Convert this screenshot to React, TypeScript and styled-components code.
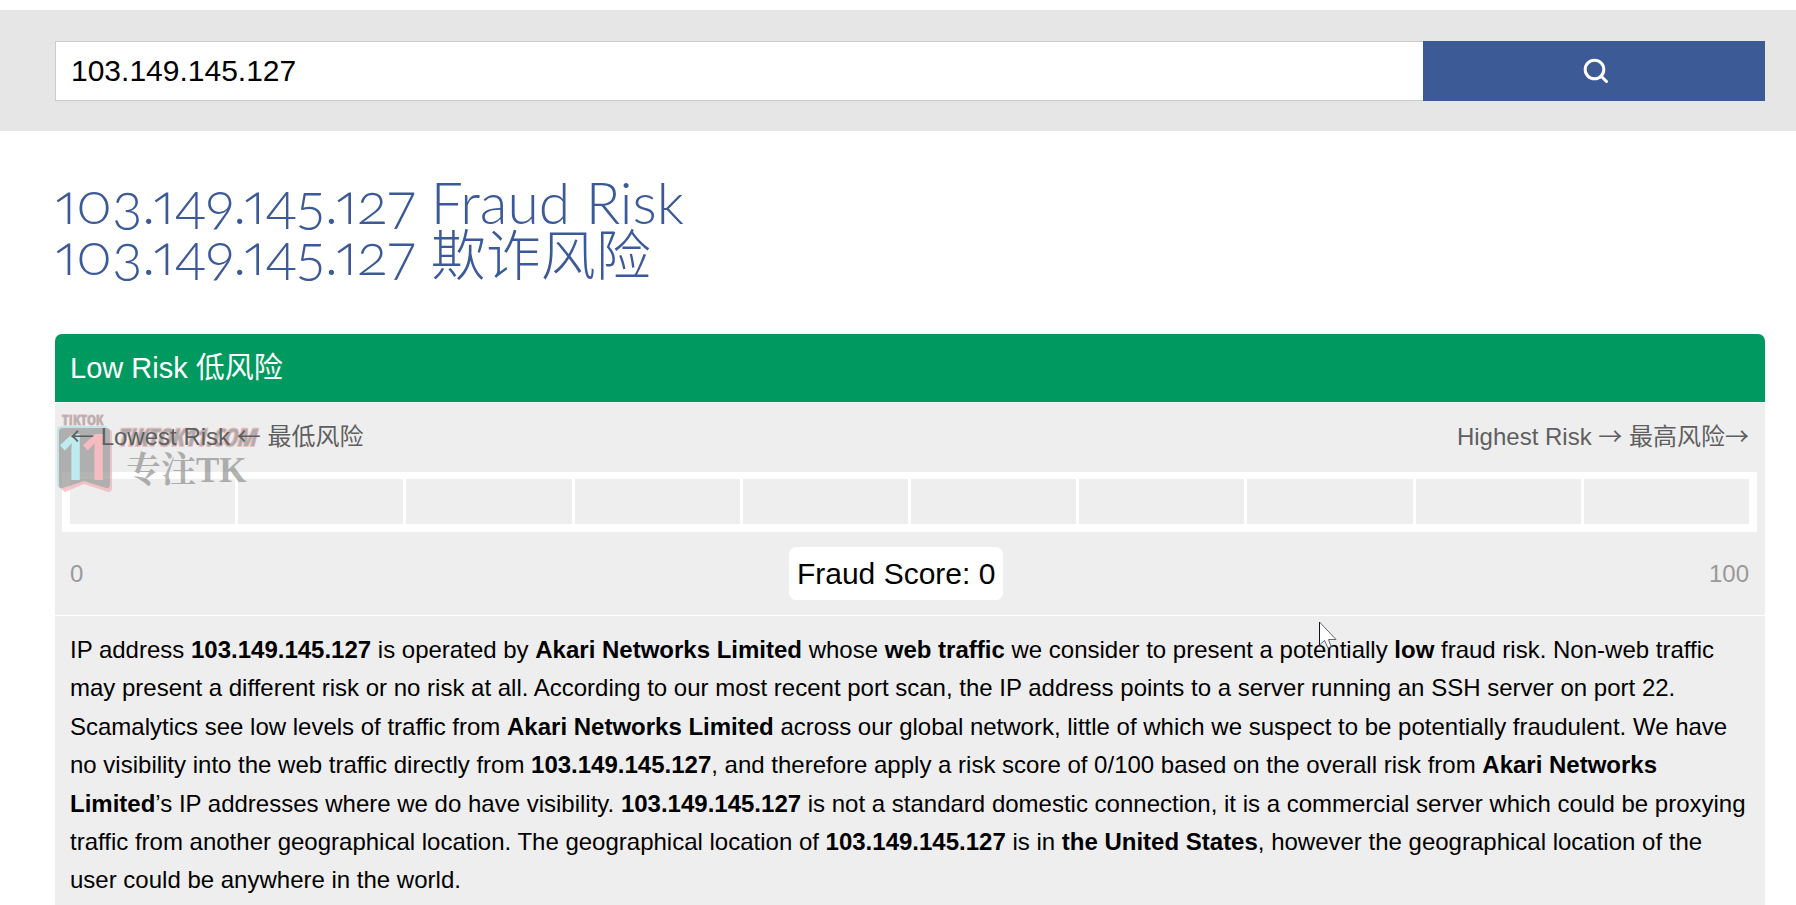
import React, { useState } from 'react'
import styled, { createGlobalStyle } from 'styled-components'

const GlobalStyle = createGlobalStyle`
  * {
    box-sizing: border-box;
  }

  body {
    margin: 0;
    background: #fff;
    color: #000;
    font-family: "Liberation Sans", "Noto Sans CJK SC", sans-serif;
    font-size: 24px;
  }
`

const Page = styled.div`
  padding-top: 10px;
  overflow: hidden;
`

const SearchBar = styled.form`
  display: flex;
  padding: 31px 31px 30px 55px;
  background: #e6e6e6;
`

const SearchInput = styled.input`
  width: 80%;
  height: 60px;
  padding: 0 15px;
  border: 1px solid #ccc;
  border-right: 0;
  border-radius: 0;
  background: #fff;
  color: #000;
  font-family: inherit;
  font-size: 30px;
  outline: none;
`

const SearchButton = styled.button`
  width: 20%;
  display: flex;
  align-items: center;
  justify-content: center;
  padding: 0 0 0 4px;
  border: 0;
  background: #3c5a96;
  cursor: pointer;
`

const Main = styled.main`
  padding: 46px 31px 0 55px;
`

const Title = styled.h1`
  margin: 0 0 54px;
  color: #3c5a99;
  font-family: Lato, "Noto Sans CJK SC", sans-serif;
  font-size: 57px;
  font-weight: 300;
  line-height: 51px;
  font-variant-numeric: oldstyle-nums proportional-nums;
`

const TitleChinese = styled.span`
  font-size: 55px;
`

const Panel = styled.section`
  position: relative;
  background: #eee;
  border-radius: 7px 7px 0 0;
`

const PanelTitle = styled.div`
  padding: 14px 15px;
  border-radius: 7px 7px 0 0;
  background: #009a60;
  color: #fff;
  font-size: 29px;
  line-height: 40px;
`

const Score = styled.div`
  padding: 15px 8px 15px 7px;
  border-top: 1px solid #fff;
  border-bottom: 1px solid #fff;
`

const ScaleRow = styled.div`
  display: flex;
  justify-content: space-between;
  align-items: center;
  padding: 0 8px;
`

const Labels = styled(ScaleRow)`
  position: relative;
  z-index: 1;
  padding-bottom: 16px;
  color: #5f5f5f;
  line-height: 38px;
`

const Arrow = styled.span`
  font-family: "Noto Sans CJK SC", sans-serif;
  line-height: 1;
`

const Values = styled(ScaleRow)`
  padding-top: 15px;
  color: #999;
`

const Bar = styled.div`
  display: flex;
  gap: 3px;
  padding: 7px 8px 8px;
  background: #fff;
`

const Cell = styled.div`
  flex: 1;
  height: 45px;
  background: #eee;
`

const FraudScore = styled.div`
  padding: 8px;
  border-radius: 7px;
  background: #fff;
  color: #000;
  font-size: 30px;
  line-height: 37px;
`

const Description = styled.p`
  margin: 0;
  padding: 15px;
  line-height: 1.6;
`

const Watermark = styled.svg`
  position: absolute;
  left: 0;
  top: 78px;
  overflow: visible;
  pointer-events: none;
`

const Cursor = styled.svg`
  position: absolute;
  left: 1263px;
  top: 287px;
  pointer-events: none;
`

const narrow = '"Liberation Sans Narrow", "Open Sans Condensed", "DejaVu Sans Condensed", sans-serif'

const ip = '103.149.145.127'
const isp = 'Akari Networks Limited'

const App = () => {
  const [query, setQuery] = useState(ip)

  return (
    <Page>
      <GlobalStyle />
      <SearchBar onSubmit={(e) => e.preventDefault()}>
        <SearchInput
          type="text"
          aria-label="IP address"
          value={query}
          onChange={(e) => setQuery(e.target.value)}
        />
        <SearchButton type="submit" aria-label="Search">
          <svg width="26" height="26" viewBox="0 0 26 26" fill="none" stroke="#fff" strokeWidth="3" strokeLinecap="round">
            <circle cx="11.5" cy="11.5" r="9.3" />
            <path d="M18.5 18.5 L23.5 23.5" />
          </svg>
        </SearchButton>
      </SearchBar>

      <Main>
        <Title>
          {ip} Fraud Risk
          <br />
          {ip} <TitleChinese>欺诈风险</TitleChinese>
        </Title>

        <Panel>
          <PanelTitle>Low Risk 低风险</PanelTitle>
          <Score>
            <Labels>
              <span>
                <Arrow>←</Arrow> Lowest Risk <Arrow>←</Arrow> 最低风险
              </span>
              <span>
                Highest Risk <Arrow>→</Arrow> 最高风险<Arrow>→</Arrow>
              </span>
            </Labels>
            <Bar>
              {Array.from({ length: 10 }, (_, i) => (
                <Cell key={i} />
              ))}
            </Bar>
            <Values>
              <span>0</span>
              <FraudScore>Fraud Score: 0</FraudScore>
              <span>100</span>
            </Values>
          </Score>
          <Description>
            IP address <b>{ip}</b> is operated by <b>{isp}</b> whose <b>web traffic</b> we
            consider to present a potentially <b>low</b> fraud risk. Non-web traffic may present
            a different risk or no risk at all. According to our most recent port scan, the IP
            address points to a server running an SSH server on port 22. Scamalytics see low
            levels of traffic from <b>{isp}</b> across our global network, little of which we
            suspect to be potentially fraudulent. We have no visibility into the web traffic
            directly from <b>{ip}</b>, and therefore apply a risk score of 0/100 based on the
            overall risk from <b>{isp}</b>’s IP addresses where we do have visibility. <b>{ip}</b>{' '}
            is not a standard domestic connection, it is a commercial server which could be
            proxying traffic from another geographical location. The geographical location
            of <b>{ip}</b> is in <b>the United States</b>, however the geographical location of
            the user could be anywhere in the world.
          </Description>

          <Watermark width="215" height="84" viewBox="0 0 215 84" fontFamily={narrow} fontWeight="700">
            {/* ribbon badge with its cyan and pink edges */}
            <g opacity="0.75">
              <path d="M6 14 H52 L50 72 L29 68 L6 76 Q2 76 2 72 V18 Q2 14 6 14 Z" fill="#b5e2e8" />
              <path d="M8 20 L53 17 Q57 17 57 21 V76 Q57 80 53 80 L29 72 L10 80 L5 76 Z" fill="#f3b4b8" />
              <path d="M8 16 H51 Q55 16 55 20 V72 Q55 77 51 76 L29 69 L8 76 Q4 77 4 73 V20 Q4 16 8 16 Z" fill="#9b9b9a" />
            </g>
            <text x="2" y="68" fontSize="64" fill="#bdebf0">1</text>
            <text x="25" y="68" fontSize="64" fill="#f4bcc0">1</text>

            <text x="7" y="13" fontSize="15" fill="#b2b2b2" stroke="#f0b8bb" strokeWidth="1" paintOrder="stroke">
              TIKTOK
            </text>
            <text x="62" y="34" fontSize="24" fontStyle="italic" opacity="0.55" fill="#777" stroke="#f09a9f" strokeWidth="2" paintOrder="stroke">
              TIKTOK11.COM
            </text>
            <text x="71" y="70" fontSize="35" fill="#777" opacity="0.55" fontFamily='"Liberation Serif", "Noto Serif CJK SC", "Noto Sans CJK SC", serif'>
              专注TK
            </text>
          </Watermark>

          <Cursor width="20" height="28" viewBox="0 0 20 28">
            <path d="M1.5 1 V24 L6.5 19.5 L10 27 L13 25.5 L10.5 18.5 H18 Z" fill="#fff" stroke="#667" />
            <path d="M1.5 1 V24" stroke="#112" />
          </Cursor>
        </Panel>
      </Main>
    </Page>
  )
}

export default App
